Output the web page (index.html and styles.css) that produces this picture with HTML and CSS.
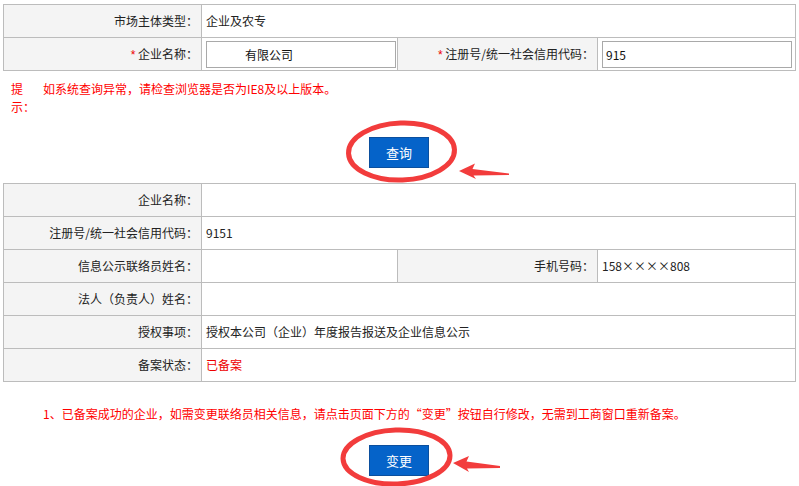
FILE: index.html
```html
<!DOCTYPE html>
<html lang="zh-CN">
<head>
<meta charset="utf-8">
<title>联络员备案</title>
<link rel="stylesheet" href="styles.css">
</head>
<body>
<div class="page">
  <div class="grid grid-top">
    <div class="cell label">市场主体类型：</div>
    <div class="cell value span3">企业及农专</div>

    <div class="cell label"><span class="req">*</span> 企业名称：</div>
    <div class="cell value"><input class="field field-name" type="text" value="有限公司"></div>
    <div class="cell label"><span class="req">*</span> 注册号/统一社会信用代码：</div>
    <div class="cell value"><input class="field" type="text" value="915"></div>
  </div>

  <div class="tip">
    <div class="tip-label">提示：</div>
    <div class="tip-text">如系统查询异常，请检查浏览器是否为IE8及以上版本。</div>
  </div>

  <div class="btn-row btn-row-query">
    <button class="btn" type="button">查询</button>
  </div>

  <div class="grid grid-result">
    <div class="cell label">企业名称：</div>
    <div class="cell value span3"></div>

    <div class="cell label">注册号/统一社会信用代码：</div>
    <div class="cell value span3">9151</div>

    <div class="cell label">信息公示联络员姓名：</div>
    <div class="cell value"></div>
    <div class="cell label">手机号码：</div>
    <div class="cell value">158××××808</div>

    <div class="cell label">法人（负责人）姓名：</div>
    <div class="cell value span3"></div>

    <div class="cell label">授权事项：</div>
    <div class="cell value span3">授权本公司（企业）年度报告报送及企业信息公示</div>

    <div class="cell label">备案状态：</div>
    <div class="cell value span3 status">已备案</div>
  </div>

  <p class="note">1、已备案成功的企业，如需变更联络员相关信息，请点击页面下方的“变更”按钮自行修改，无需到工商窗口重新备案。</p>

  <div class="btn-row btn-row-change">
    <button class="btn" type="button">变更</button>
  </div>

  <svg class="marks" width="799" height="486" viewBox="0 0 799 486" aria-hidden="true">
    <ellipse cx="401.5" cy="151.5" rx="53" ry="28.5" transform="rotate(-2 401.5 151.5)" class="ring"/>
    <polygon class="arrow" points="459,171 475,163.5 472.5,169 509,173.5 509,175 473.5,175.5 476,179"/>
    <ellipse cx="396.5" cy="457" rx="53.5" ry="27" transform="rotate(-2 396.5 457)" class="ring"/>
    <polygon class="arrow" points="453,463 469,456 466.5,461.5 500,466 500,468 467,468.5 469,472"/>
  </svg>
</div>
</body>
</html>
```

FILE: styles.css
```css
* {
  box-sizing: border-box;
}

html, body {
  margin: 0;
  padding: 0;
  background: #ffffff;
}

body {
  font-family: "Noto Sans CJK SC", "Noto Sans", "Liberation Sans", sans-serif;
  font-size: 12px;
  color: #333333;
}

.page {
  position: relative;
  width: 799px;
  height: 486px;
  padding: 4px 0 0 3px;
  overflow: hidden;
}

.grid {
  display: grid;
  grid-template-columns: 198px 196px 200px 198px;
  width: 793px;
  border-top: 1px solid #bcbcbc;
  border-left: 1px solid #bcbcbc;
}

.cell {
  height: 33px;
  line-height: 32px;
  border-right: 1px solid #bcbcbc;
  border-bottom: 1px solid #bcbcbc;
  white-space: nowrap;
  overflow: hidden;
}

.label {
  background: #f4f4f4;
  text-align: right;
  padding-right: 3px;
  color: #222222;
}

.value {
  padding-left: 4px;
  background: #ffffff;
  color: #222222;
}

.span3 {
  grid-column: span 3;
}

.req {
  color: #ee0000;
  font-family: "Liberation Sans", sans-serif;
}

.status {
  color: #ee0000;
}

.field {
  display: block;
  margin-top: 3px;
  width: 190px;
  height: 27px;
  border: 1px solid #a9a9a9;
  padding: 0 0 0 3px;
  font-family: "Noto Sans CJK SC", "Noto Sans", sans-serif;
  font-size: 12px;
  color: #111111;
  background: #ffffff;
  outline: none;
}

.field-name {
  padding-left: 38px;
}

.tip {
  display: flex;
  margin-top: 9px;
  color: #ff0000;
  line-height: 18px;
}

.tip-label {
  width: 24px;
  margin-left: 8px;
}

.tip-text {
  margin-left: 8px;
}

.btn-row {
  display: flex;
  justify-content: center;
}

.btn-row-query {
  margin-top: 21px;
  margin-bottom: 15px;
}

.btn-row-change {
  margin-top: 22px;
}

.btn {
  width: 60px;
  height: 31px;
  margin-left: -4px;
  background: #0563c9;
  border: 1px solid #0b4f9e;
  color: #ffffff;
  font-family: "Noto Sans CJK SC", "Noto Sans", sans-serif;
  font-size: 13px;
  padding: 0;
  cursor: pointer;
}

.note {
  margin: 23px 0 0 40px;
  color: #ff0000;
  line-height: 18px;
}

.marks {
  position: absolute;
  top: 0;
  left: 0;
  pointer-events: none;
}

.ring {
  fill: none;
  stroke: #f23c3c;
  stroke-width: 5;
}

.arrow {
  fill: #f23c3c;
}
```
